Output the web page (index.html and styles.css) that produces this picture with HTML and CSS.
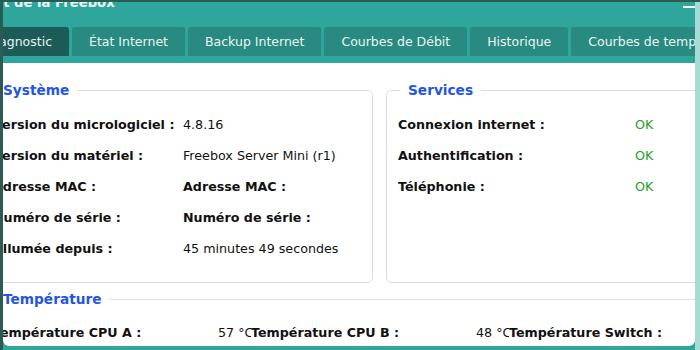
FILE: index.html
```html
<!DOCTYPE html>
<html lang="fr">
<head>
<meta charset="utf-8">
<title>État de la Freebox</title>
<link rel="stylesheet" href="styles.css">
</head>
<body>
<div class="frame">
  <div class="edge"></div>
  <div class="window">
    <div class="titlebar">
      <span class="title">État de la Freebox</span>
      <span class="winbtn"></span>
    </div>
    <div class="tabbar">
      <div class="tab active">Diagnostic</div>
      <div class="tab">État Internet</div>
      <div class="tab">Backup Internet</div>
      <div class="tab">Courbes de Débit</div>
      <div class="tab">Historique</div>
      <div class="tab">Courbes de température</div>
    </div>
    <div class="panel">
      <div class="panel-inner">
        <div class="boxes">
          <fieldset class="box sys">
            <legend>Système</legend>
            <div class="grid sys-grid">
              <div class="lbl">Version du micrologiciel :</div><div class="val">4.8.16</div>
              <div class="lbl">Version du matériel :</div><div class="val">Freebox Server Mini (r1)</div>
              <div class="lbl">Adresse MAC :</div><div class="lbl">Adresse MAC :</div>
              <div class="lbl">Numéro de série :</div><div class="lbl">Numéro de série :</div>
              <div class="lbl">Allumée depuis :</div><div class="val">45 minutes 49 secondes</div>
            </div>
          </fieldset>
          <fieldset class="box svc">
            <legend>Services</legend>
            <div class="grid svc-grid">
              <div class="lbl">Connexion internet :</div><div class="val ok">OK</div>
              <div class="lbl">Authentification :</div><div class="val ok">OK</div>
              <div class="lbl">Téléphonie :</div><div class="val ok">OK</div>
            </div>
          </fieldset>
        </div>
        <fieldset class="box temp">
          <legend>Température</legend>
          <div class="grid temp-grid">
            <div class="lbl">Température CPU A :</div><div class="val clip">57 °C</div>
            <div class="lbl">Température CPU B :</div><div class="val clip">48 °C</div>
            <div class="lbl">Température Switch :</div><div class="val clip">52 °C</div>
          </div>
        </fieldset>
      </div>
    </div>
  </div>
</div>
</body>
</html>
```

FILE: styles.css
```css
* { box-sizing: border-box; }
html, body { margin: 0; padding: 0; }
body {
  width: 700px;
  height: 350px;
  overflow: hidden;
  background: #a8dbd3;
  font-family: "DejaVu Sans", sans-serif;
  color: #111;
}
.frame {
  display: flex;
  height: 350px;
  border-top: 2px solid #2a5b55;
}
.edge {
  width: 3px;
  flex: none;
  background: #2a5b55;
}
.window {
  width: 692px;
  flex: none;
  display: flex;
  flex-direction: column;
  overflow: hidden;
  background: #2fa69b;
}
.titlebar {
  height: 25px;
  flex: none;
  position: relative;
  overflow: hidden;
}
.title {
  display: block;
  margin-left: -24px;
  margin-top: -7px;
  font-size: 13.2px;
  font-weight: bold;
  line-height: 16px;
  color: #eef8f6;
}
.winbtn {
  position: absolute;
  right: 0;
  top: 4px;
  width: 12px;
  height: 2px;
  background: #f2fbfa;
}
.tabbar {
  height: 36px;
  flex: none;
  display: flex;
  gap: 3px;
  margin-left: -34px;
  white-space: nowrap;
}
.tab {
  flex: none;
  height: 29px;
  line-height: 29px;
  padding: 0 17px;
  font-size: 12.5px;
  color: #eaf6f4;
  background: #288a81;
  border-radius: 3px 3px 1px 1px;
}
.tab.active {
  background: #1c5b56;
}
.panel {
  flex: 1;
  margin-bottom: 4px;
  background: #fff;
  border-radius: 0 0 6px 6px;
  overflow: hidden;
}
.panel-inner {
  margin-left: -22px;
  padding-top: 19px;
  width: 820px;
}
.boxes {
  display: flex;
  gap: 13px;
}
.box {
  margin: 0;
  border: 1px solid #dedede;
  border-radius: 5px;
  padding: 0 11px;
  min-width: 0;
}
.box legend {
  margin-left: 2px;
  padding: 0 8px;
  font-size: 13.7px;
  font-weight: bold;
  color: #2356e2;
  line-height: 17px;
}
.sys, .svc { width: 392px; flex: none; padding-top: 10px; padding-bottom: 18px; }
.temp { width: 797px; margin-top: 8px; padding-top: 9px; padding-bottom: 6px; }
.grid {
  display: grid;
  font-size: 12.7px;
  line-height: 31px;
  white-space: nowrap;
}
.sys-grid { grid-template-columns: 190px 1fr; }
.svc-grid { grid-template-columns: 237px 1fr; }
.temp-grid { grid-template-columns: 225px 33px 225px 33px 225px 33px; }
.lbl { font-weight: bold; }
.val { font-weight: normal; }
.clip { overflow: hidden; }
.ok { color: #1f9e1f; }
```
